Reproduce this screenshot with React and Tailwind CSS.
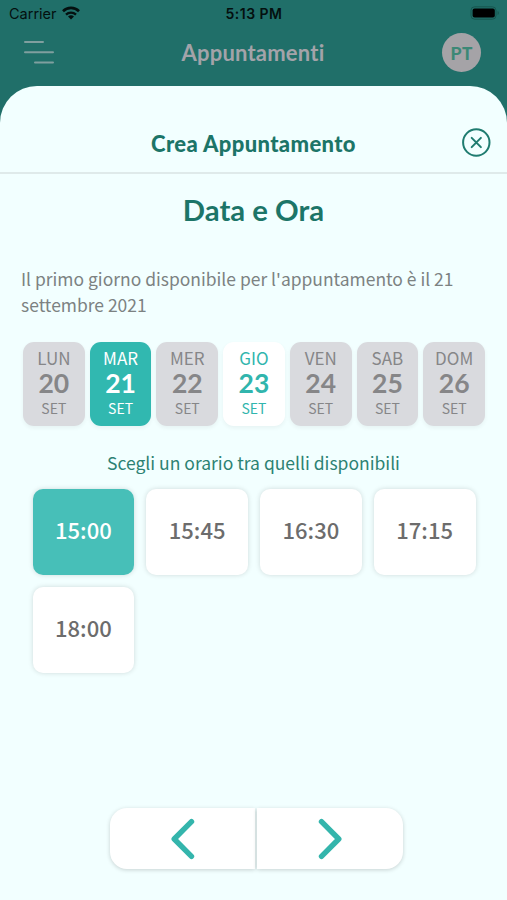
import React, { useState } from "react";

const days = [
    { name: "LUN", number: 20, month: "SET", available: false },
    { name: "MAR", number: 21, month: "SET", available: true },
    { name: "MER", number: 22, month: "SET", available: false },
    { name: "GIO", number: 23, month: "SET", available: true },
    { name: "VEN", number: 24, month: "SET", available: false },
    { name: "SAB", number: 25, month: "SET", available: false },
    { name: "DOM", number: 26, month: "SET", available: false },
];

const times = ["15:00", "15:45", "16:30", "17:15", "18:00"];

function StatusBar() {
    return (
        <div className="flex h-7 items-center justify-between pl-[9px] pr-[8px] font-['Inter',sans-serif] text-[#04100f]">
            <div className="flex w-40 items-center gap-[5px]">
                <span className="text-[14.5px] leading-7">Carrier</span>
                <svg width="18" height="14" viewBox="0 0 18 14" className="-mt-[2px]" fill="none" stroke="currentColor">
                    <path d="M1 5.2a11.4 11.4 0 0 1 16 0" strokeWidth="2.6" />
                    <path d="M4 8.6a7.2 7.2 0 0 1 10 0" strokeWidth="2.3" />
                    <path d="M9 13.6 6 10.6a4.3 4.3 0 0 1 6 0z" fill="currentColor" stroke="none" />
                </svg>
            </div>
            <span className="text-[14px] font-semibold leading-7 tracking-[0.5px]">5:13 PM</span>
            <div className="flex w-40 justify-end">
                <svg width="30" height="14" viewBox="0 0 30 14" className="-mr-[1px] -mt-[2px]">
                    <rect x="1" y="0.8" width="25" height="12.4" rx="3.6" fill="none" stroke="#17564f" />
                    <rect x="2.6" y="2.6" width="22.2" height="8.8" rx="2" fill="#000" />
                    <path d="M27.6 5v4c1.6-.8 1.6-3.2 0-4z" fill="#17564f" />
                </svg>
            </div>
        </div>
    );
}

function Header() {
    return (
        <div className="flex h-12 items-center justify-between pl-6 pr-[26px]">
            <svg width="40" height="26" viewBox="0 0 40 26" stroke="#7f9f9f" strokeWidth="2" strokeLinecap="round">
                <path d="M1 3h18M1 13.2h28M11 23.6h18" />
            </svg>
            <h1 className="pt-[2px] text-[22px] font-bold leading-[50px] tracking-[0.2px] text-[#a3a3a9] [font-variant-ligatures:none]">
                Appuntamenti
            </h1>
            <div className="flex h-[39px] w-[39px] items-center justify-center rounded-full bg-[#a5a3a7] pt-px font-['Noto_Sans_CJK_SC',sans-serif] text-[17.5px] font-bold leading-[20px] text-[#3c8876]">
                PT
            </div>
        </div>
    );
}

function DayCard({ day, selected, onSelect }) {
    let colors = "bg-[#d9dade] text-[#868688]";
    if (selected) {
        colors = "bg-[#31b8b0] text-white";
    } else if (day.available) {
        colors = "bg-white text-[#31b5ad]";
    }

    return (
        <button
            type="button"
            disabled={!day.available}
            onClick={onSelect}
            className={`flex h-[84px] flex-col items-center rounded-[11px] pt-1 shadow-[0_2px_4px_rgba(0,0,0,0.05)] ${colors}`}
        >
            <span className="text-[17px] leading-6">{day.name}</span>
            <span className="font-['Lato',sans-serif] text-[26.5px] font-bold leading-[26px]">
                {day.number}
            </span>
            <span className="text-[14px] leading-6">{day.month}</span>
        </button>
    );
}

function TimeCard({ time, selected, onSelect }) {
    return (
        <button
            type="button"
            onClick={onSelect}
            className={`flex h-[86px] items-center justify-center rounded-[10px] pb-[5px] text-[22px] font-medium shadow-[0_0_5px_rgba(0,0,0,0.15)] ${
                selected ? "bg-[#47bfb8] text-white" : "bg-white text-[#6c6c6c]"
            }`}
        >
            {time}
        </button>
    );
}

export default function App() {
    const [selectedDay, setSelectedDay] = useState(21);
    const [selectedTime, setSelectedTime] = useState("15:00");

    return (
        <div className="flex h-[900px] w-[507px] flex-col overflow-hidden bg-[#206f69] font-['Lato',sans-serif]">
            <div className="h-[86px] shrink-0">
                <StatusBar />
                <Header />
            </div>

            <main className="flex flex-1 flex-col rounded-t-[37px] bg-[#f2ffff]">
                {/* Titolo della finestra */}
                <div className="grid h-[88px] shrink-0 grid-cols-[40px_1fr_40px] items-end border-b-2 border-[#dfeaea] px-[14px] pb-[13px]">
                    <span />
                    <h2 className="text-center text-[22px] font-black leading-[30px] tracking-[0.37px] text-[#1c7568]">
                        Crea Appuntamento
                    </h2>
                    <button type="button" aria-label="Chiudi" className="flex justify-end">
                        <svg width="32" height="32" viewBox="0 0 32 32" fill="none" stroke="#1f7c70" strokeWidth="2" strokeLinecap="round">
                            <circle cx="15.3" cy="15.5" r="13.2" />
                            <path d="m10.7 10.9 9.2 9.2M19.9 10.9l-9.2 9.2" />
                        </svg>
                    </button>
                </div>

                <h3 className="mt-4 text-center text-[29.3px] font-bold leading-10 text-[#1c7568]">
                    Data e Ora
                </h3>

                <div className="font-['Noto_Sans_CJK_SC',sans-serif]">
                    <p className="mt-[36px] px-[21px] text-[17.47px] leading-[26px] text-[#7c8282]">
                        Il primo giorno disponibile per l'appuntamento è il 21 settembre 2021
                    </p>

                    <div className="ml-[23px] mr-[22px] mt-6 grid grid-cols-7 gap-[5px]">
                        {days.map((day) => (
                            <DayCard
                                key={day.number}
                                day={day}
                                selected={selectedDay === day.number}
                                onSelect={() => setSelectedDay(day.number)}
                            />
                        ))}
                    </div>

                    <p className="mt-6 text-center text-[17.5px] leading-[26px] text-[#2c8273]">
                        Scegli un orario tra quelli disponibili
                    </p>

                    <div className="ml-[32.5px] mr-[31.5px] mt-[13px] grid grid-cols-4 gap-x-3 gap-y-3">
                        {times.map((time) => (
                            <TimeCard
                                key={time}
                                time={time}
                                selected={selectedTime === time}
                                onSelect={() => setSelectedTime(time)}
                            />
                        ))}
                    </div>
                </div>

                {/* Navigazione */}
                <div className="mb-[31px] mt-auto flex justify-center gap-[2px] pl-[6px] text-[#34b5ac]">
                    <button
                        type="button"
                        aria-label="Indietro"
                        className="flex h-[61px] w-[145px] items-center justify-center rounded-l-[17px] bg-white shadow-[0_1px_4px_rgba(0,0,0,0.18)]"
                    >
                        <svg width="24" height="42" viewBox="0 0 24 42" fill="none" stroke="currentColor" strokeWidth="5.4" strokeLinecap="round" strokeLinejoin="round">
                            <path d="M20.5 3.7 3.2 21l17.3 17.3" />
                        </svg>
                    </button>
                    <button
                        type="button"
                        aria-label="Avanti"
                        className="flex h-[61px] w-[146px] items-center justify-center rounded-r-[17px] bg-white shadow-[0_1px_4px_rgba(0,0,0,0.18)]"
                    >
                        <svg width="24" height="42" viewBox="0 0 24 42" fill="none" stroke="currentColor" strokeWidth="5.4" strokeLinecap="round" strokeLinejoin="round">
                            <path d="M3.5 3.7 20.8 21 3.5 38.3" />
                        </svg>
                    </button>
                </div>
            </main>
        </div>
    );
}
